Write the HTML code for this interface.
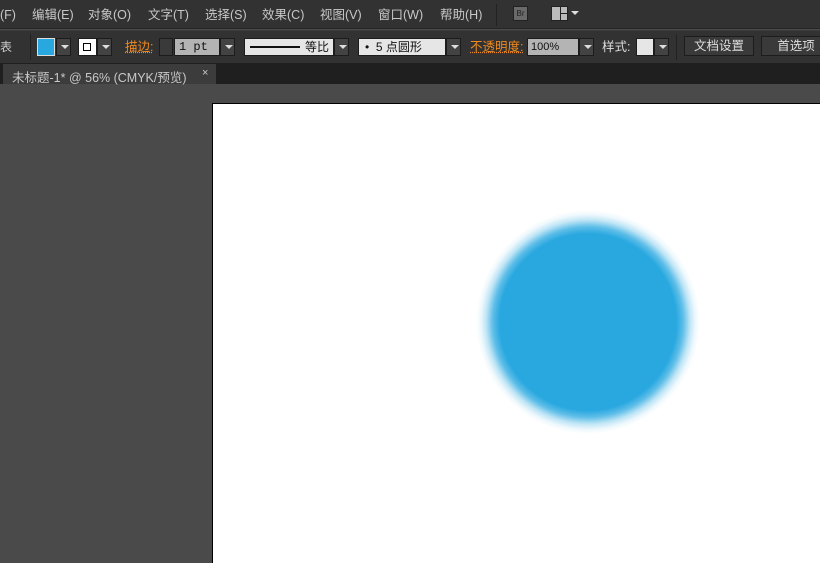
<!DOCTYPE html>
<html><head><meta charset="utf-8"><style>
*{margin:0;padding:0;box-sizing:border-box}
body{width:820px;height:561px;overflow:hidden;background:#4a4a4a;font-family:"Liberation Sans","Noto Sans CJK SC",sans-serif;font-size:12px;color:#cfcfcf;position:relative}
.a{position:absolute;white-space:nowrap}
#menu{left:0;top:0;width:820px;height:29px;background:#323232;border-bottom:1px solid #262626}
#tool{left:0;top:30px;width:820px;height:33px;background:#323232;border-top:1px solid #3c3c3c}
#tabs{left:0;top:63px;width:820px;height:21px;background:#1f1f1f}
.m{top:6px;height:18px;line-height:18px;font-size:12.5px;color:#c8c8c8}
.box{height:18px;top:38px;border:1px solid #1c1c1c}
.dd{background:#434343;width:15px}
.dd:after{content:"";position:absolute;left:4px;top:6px;border-left:4px solid transparent;border-right:4px solid transparent;border-top:4px solid #ddd}
.or{color:#f08a1e;top:38px;line-height:18px;font-size:12.5px}
.btn{top:36px;height:20px;background:#3a3a3a;border:1px solid #1c1c1c;color:#ddd;text-align:center;line-height:18px;font-size:12.5px}
</style></head><body>
<div class="a" id="menu"></div>
<div class="a m" style="left:0">(F)</div>
<div class="a m" style="left:32px">编辑(E)</div>
<div class="a m" style="left:88px">对象(O)</div>
<div class="a m" style="left:148px">文字(T)</div>
<div class="a m" style="left:205px">选择(S)</div>
<div class="a m" style="left:262px">效果(C)</div>
<div class="a m" style="left:320px">视图(V)</div>
<div class="a m" style="left:378px">窗口(W)</div>
<div class="a m" style="left:440px">帮助(H)</div>
<div class="a" style="left:496px;top:4px;width:1px;height:22px;background:#222"></div>
<div class="a" style="left:513px;top:6px;width:15px;height:15px;background:#6a6a6a;border:1px solid #222;font-size:8px;color:#222;text-align:center;line-height:13px">Br</div>
<div class="a" style="left:551px;top:6px;width:17px;height:15px;background:#bbb;border:1px solid #222"><div class="a" style="left:8px;top:0;width:1px;height:13px;background:#222"></div><div class="a" style="left:8px;top:6px;width:8px;height:1px;background:#222"></div></div>
<div class="a" style="left:571px;top:11px;border-left:4px solid transparent;border-right:4px solid transparent;border-top:4px solid #ddd"></div>

<div class="a" id="tool"></div>
<div class="a" style="left:0;top:38px;color:#ccc;line-height:18px">表</div>
<div class="a" style="left:30px;top:34px;width:1px;height:26px;background:#222"></div>
<div class="a box" style="left:37px;width:18px;background:#29a8e0;border-color:#ddd"></div>
<div class="a box dd" style="left:56px"></div>
<div class="a box" style="left:78px;width:19px;background:#fff"><div class="a" style="left:4px;top:4px;width:8px;height:8px;border:1px solid #000"></div></div>
<div class="a box dd" style="left:97px"></div>
<div class="a or" style="left:125px;text-decoration:underline dotted">描边:</div>
<div class="a box" style="left:159px;width:14px;background:#3a3a3a"></div>
<div class="a box" style="left:174px;width:46px;background:#b4b4b4;color:#111;font-family:'Liberation Mono',monospace;padding-left:4px;line-height:16px">1 pt</div>
<div class="a box dd" style="left:220px"></div>
<div class="a box" style="left:244px;width:90px;background:#e6e6e6;color:#111;line-height:16px"><div class="a" style="left:5px;top:7px;width:50px;height:2px;background:#111"></div><span class="a" style="left:60px;top:0">等比</span></div>
<div class="a box dd" style="left:334px"></div>
<div class="a box" style="left:358px;width:88px;background:#e6e6e6;color:#111;line-height:16px;padding-left:6px">•&nbsp; 5 点圆形</div>
<div class="a box dd" style="left:446px"></div>
<div class="a or" style="left:470px;text-decoration:underline dotted">不透明度:</div>
<div class="a box" style="left:527px;width:52px;background:#b4b4b4;color:#111;padding-left:3px;line-height:16px;font-size:11px">100%</div>
<div class="a box dd" style="left:579px"></div>
<div class="a" style="left:602px;top:38px;color:#ddd;line-height:18px;font-size:12.5px">样式:</div>
<div class="a box" style="left:636px;width:18px;background:#e6e6e6"></div>
<div class="a box dd" style="left:654px"></div>
<div class="a" style="left:676px;top:34px;width:1px;height:26px;background:#222"></div>
<div class="a btn" style="left:684px;width:70px">文档设置</div>
<div class="a btn" style="left:761px;width:70px">首选项</div>

<div class="a" id="tabs"></div>
<div class="a" style="left:3px;top:64px;width:213px;height:20px;background:#3c3c3c;color:#c8c8c8;padding:3px 0 0 9px;font-size:12.5px">未标题-1* @ 56% (CMYK/预览)<span class="a" style="left:199px;top:3px;font-size:11px">×</span></div>

<div class="a" style="left:212px;top:103px;width:610px;height:460px;background:#fff;border-left:1px solid #000;border-top:1px solid #000"></div>
<div class="a" style="left:476px;top:210px;width:224px;height:224px;border-radius:50%;background:radial-gradient(circle closest-side,#29a8e0 0,#29a8e0 79%,rgba(41,168,224,.75) 85%,rgba(41,168,224,.3) 91%,rgba(41,168,224,.08) 96%,rgba(41,168,224,0) 100%)"></div>
</body></html>
